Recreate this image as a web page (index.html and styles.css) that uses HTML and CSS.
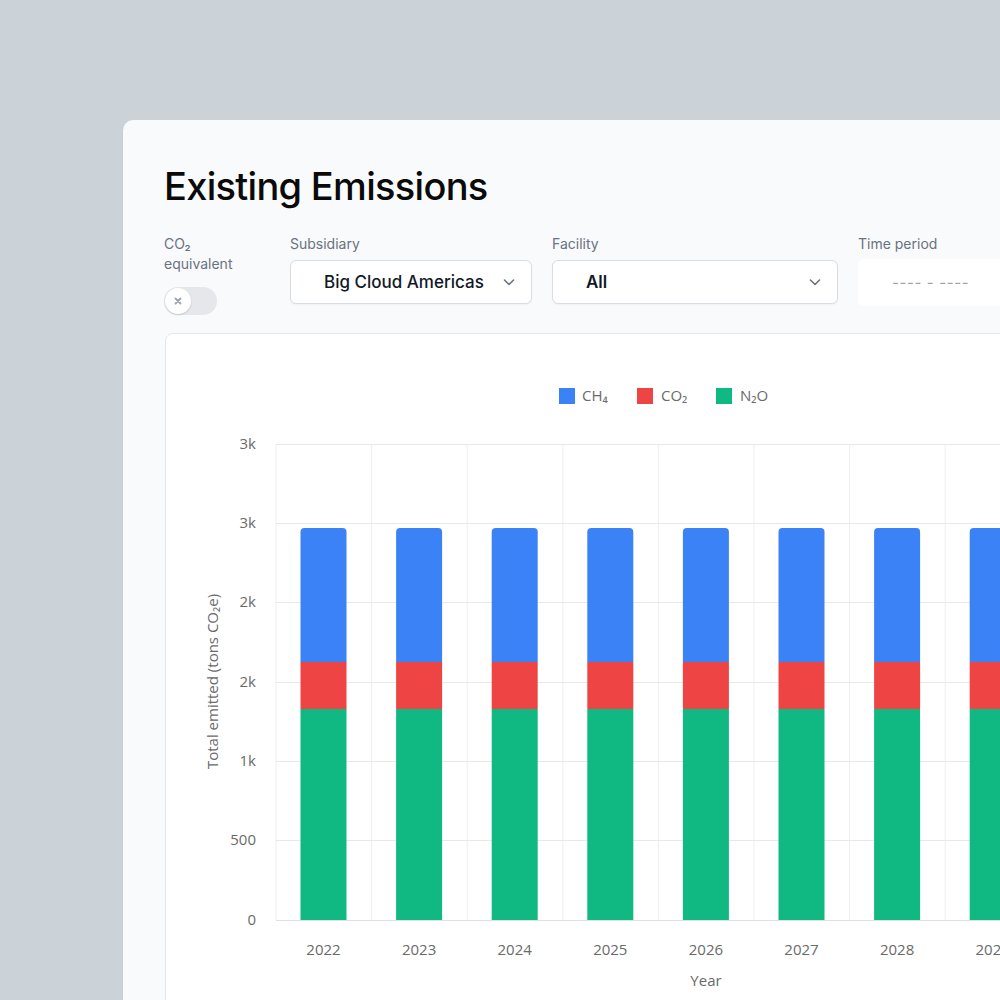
FILE: index.html
```html
<!DOCTYPE html>
<html>
<head>
<meta charset="utf-8">
<link rel="stylesheet" href="styles.css">
</head>
<body>
<div class="stage">
  <div class="panel">
    <h1 class="title">Existing Emissions</h1>
    <div class="filters">
      <div class="field field-toggle">
        <div class="label label-wrap">CO₂<br>equivalent</div>
        <div class="toggle">
          <div class="knob">
            <svg width="10" height="10" viewBox="0 0 10 10"><path d="M2.5 2.5l5 5M7.5 2.5l-5 5" stroke="#9ca3af" stroke-width="1.8" stroke-linecap="round"/></svg>
          </div>
        </div>
      </div>
      <div class="field field-sub">
        <div class="label">Subsidiary</div>
        <div class="select">
          <span class="select-text">Big Cloud Americas</span>
          <svg class="chev" width="16" height="16" viewBox="0 0 16 16"><path d="M3.5 6l4.5 4.5L12.5 6" fill="none" stroke="#6b7280" stroke-width="1.6" stroke-linecap="round" stroke-linejoin="round"/></svg>
        </div>
      </div>
      <div class="field field-fac">
        <div class="label">Facility</div>
        <div class="select">
          <span class="select-text bold">All</span>
          <svg class="chev" width="16" height="16" viewBox="0 0 16 16"><path d="M3.5 6l4.5 4.5L12.5 6" fill="none" stroke="#6b7280" stroke-width="1.6" stroke-linecap="round" stroke-linejoin="round"/></svg>
        </div>
      </div>
      <div class="field field-time">
        <div class="label">Time period</div>
        <div class="timebox">---- - ----</div>
      </div>
    </div>
    <div class="chart-card">
      <svg class="chart" width="980" height="680" viewBox="0 0 980 680">
        <g class="legend">
          <rect x="393" y="54" width="16" height="16" fill="#3b82f6"/>
          <text x="416" y="67">CH₄</text>
          <rect x="471" y="54" width="16" height="16" fill="#ef4444"/>
          <text x="495" y="67">CO₂</text>
          <rect x="550" y="54" width="16" height="16" fill="#10b981"/>
          <text x="574" y="67">N₂O</text>
        </g>
        <g class="vgrid" stroke="#efefef" stroke-width="1">
          <line x1="110" y1="110" x2="110" y2="586"/>
          <line x1="205.6" y1="110" x2="205.6" y2="586"/>
          <line x1="301.2" y1="110" x2="301.2" y2="586"/>
          <line x1="396.8" y1="110" x2="396.8" y2="586"/>
          <line x1="492.4" y1="110" x2="492.4" y2="586"/>
          <line x1="588" y1="110" x2="588" y2="586"/>
          <line x1="683.6" y1="110" x2="683.6" y2="586"/>
          <line x1="779.2" y1="110" x2="779.2" y2="586"/>
          <line x1="874.8" y1="110" x2="874.8" y2="586"/>
          <line x1="970.4" y1="110" x2="970.4" y2="586"/>
        </g>
        <g class="hgrid" stroke="#e8e8e8" stroke-width="1">
          <line x1="110" y1="110.5" x2="980" y2="110.5"/>
          <line x1="110" y1="189.5" x2="980" y2="189.5"/>
          <line x1="110" y1="268.5" x2="980" y2="268.5"/>
          <line x1="110" y1="348.5" x2="980" y2="348.5"/>
          <line x1="110" y1="427.5" x2="980" y2="427.5"/>
          <line x1="110" y1="506.5" x2="980" y2="506.5"/>
          <line x1="110" y1="586.5" x2="980" y2="586.5" stroke="#e0e0e0"/>
        </g>
        <g class="yticks" text-anchor="end">
          <text x="90" y="115">3k</text>
          <text x="90" y="194">3k</text>
          <text x="90" y="273">2k</text>
          <text x="90" y="353">2k</text>
          <text x="90" y="432">1k</text>
          <text x="90" y="511">500</text>
          <text x="90" y="591">0</text>
        </g>
        <g class="bars">
          <g transform="translate(134.5,0)"><path d="M0 328V198Q0 194 4 194H42Q46 194 46 198V328Z" fill="#3b82f6"/><rect y="328" width="46" height="47" fill="#ef4444"/><rect y="375" width="46" height="211" fill="#10b981"/></g>
          <g transform="translate(230.1,0)"><path d="M0 328V198Q0 194 4 194H42Q46 194 46 198V328Z" fill="#3b82f6"/><rect y="328" width="46" height="47" fill="#ef4444"/><rect y="375" width="46" height="211" fill="#10b981"/></g>
          <g transform="translate(325.7,0)"><path d="M0 328V198Q0 194 4 194H42Q46 194 46 198V328Z" fill="#3b82f6"/><rect y="328" width="46" height="47" fill="#ef4444"/><rect y="375" width="46" height="211" fill="#10b981"/></g>
          <g transform="translate(421.3,0)"><path d="M0 328V198Q0 194 4 194H42Q46 194 46 198V328Z" fill="#3b82f6"/><rect y="328" width="46" height="47" fill="#ef4444"/><rect y="375" width="46" height="211" fill="#10b981"/></g>
          <g transform="translate(516.9,0)"><path d="M0 328V198Q0 194 4 194H42Q46 194 46 198V328Z" fill="#3b82f6"/><rect y="328" width="46" height="47" fill="#ef4444"/><rect y="375" width="46" height="211" fill="#10b981"/></g>
          <g transform="translate(612.5,0)"><path d="M0 328V198Q0 194 4 194H42Q46 194 46 198V328Z" fill="#3b82f6"/><rect y="328" width="46" height="47" fill="#ef4444"/><rect y="375" width="46" height="211" fill="#10b981"/></g>
          <g transform="translate(708.1,0)"><path d="M0 328V198Q0 194 4 194H42Q46 194 46 198V328Z" fill="#3b82f6"/><rect y="328" width="46" height="47" fill="#ef4444"/><rect y="375" width="46" height="211" fill="#10b981"/></g>
          <g transform="translate(803.7,0)"><path d="M0 328V198Q0 194 4 194H42Q46 194 46 198V328Z" fill="#3b82f6"/><rect y="328" width="46" height="47" fill="#ef4444"/><rect y="375" width="46" height="211" fill="#10b981"/></g>
          <g transform="translate(899.3,0)"><path d="M0 328V198Q0 194 4 194H42Q46 194 46 198V328Z" fill="#3b82f6"/><rect y="328" width="46" height="47" fill="#ef4444"/><rect y="375" width="46" height="211" fill="#10b981"/></g>
        </g>
        <g class="xticks" text-anchor="middle">
          <text x="157.5" y="621">2022</text>
          <text x="253.1" y="621">2023</text>
          <text x="348.7" y="621">2024</text>
          <text x="444.3" y="621">2025</text>
          <text x="539.9" y="621">2026</text>
          <text x="635.5" y="621">2027</text>
          <text x="731.1" y="621">2028</text>
          <text x="826.7" y="621">2029</text>
          <text x="922.3" y="621">2030</text>
        </g>
        <text class="axis-title" x="540" y="652" text-anchor="middle">Year</text>
        <text class="axis-title" transform="translate(52,347.5) rotate(-90)" text-anchor="middle">Total emitted (tons CO₂e)</text>
      </svg>
    </div>
  </div>
</div>
</body>
</html>
```
FILE: styles.css
```css
html, body {
  margin: 0;
  padding: 0;
}
body {
  background: #cbd3d9;
  overflow: hidden;
  width: 1000px;
  height: 1000px;
  font-family: Inter, "Noto Sans", sans-serif;
}
.stage {
  padding: 120px 0 0 123px;
  width: 1300px;
}
.panel {
  width: 1100px;
  height: 1000px;
  background: #f8fafc;
  border-radius: 10px 0 0 0;
  padding: 42px 0 0 41px;
  box-sizing: border-box;
  box-shadow: 0 1px 3px rgba(0,0,0,0.05);
}
.title {
  margin: 0;
  font-size: 38px;
  line-height: 48px;
  font-weight: 500;
  color: #0a0a0a;
  letter-spacing: -0.7px;
}
.filters {
  display: flex;
  gap: 20px;
  margin-top: 24px;
  align-items: flex-start;
}
.field {
  display: flex;
  flex-direction: column;
}
.field-toggle { width: 106px; }
.field-sub { width: 242px; }
.field-fac { width: 286px; }
.field-time { width: 200px; }
.label {
  font-size: 14px;
  line-height: 20px;
  color: #6b7280;
  margin-bottom: 6px;
}
.label-wrap {
  margin-bottom: 0;
}
.toggle {
  margin-top: 13px;
  width: 53px;
  height: 28px;
  border-radius: 14px;
  background: #e5e7eb;
  position: relative;
}
.knob {
  position: absolute;
  left: 1px;
  top: 1px;
  width: 26px;
  height: 26px;
  border-radius: 50%;
  background: #fff;
  box-shadow: 0 1px 2px rgba(0,0,0,0.15);
  display: flex;
  align-items: center;
  justify-content: center;
}
.knob svg { display: block; }
.select {
  height: 44px;
  box-sizing: border-box;
  background: #fff;
  border: 1px solid #d9dde3;
  border-radius: 6px;
  display: flex;
  align-items: center;
  justify-content: space-between;
  padding: 0 14px 0 33px;
  box-shadow: 0 1px 2px rgba(0,0,0,0.04);
}
.select-text {
  font-size: 17px;
  font-weight: 500;
  color: #111827;
}
.select-text.bold {
  font-weight: 600;
}
.chev { display: block; }
.timebox {
  height: 47px;
  margin-top: -1px;
  background: #fff;
  border-radius: 6px;
  box-sizing: border-box;
  padding-left: 34px;
  display: flex;
  align-items: center;
  font-size: 15px;
  color: #9ca3af;
  letter-spacing: 0.6px;
}
.chart-card {
  margin-top: 18px;
  margin-left: 1px;
  width: 1040px;
  height: 700px;
  background: #fff;
  border: 1px solid #e5e7eb;
  border-radius: 8px;
  box-sizing: border-box;
}
.chart {
  display: block;
  font-family: "Open Sans", "DejaVu Sans", sans-serif;
  font-size: 15px;
}
.chart text {
  fill: #6a6a6a;
}
```
